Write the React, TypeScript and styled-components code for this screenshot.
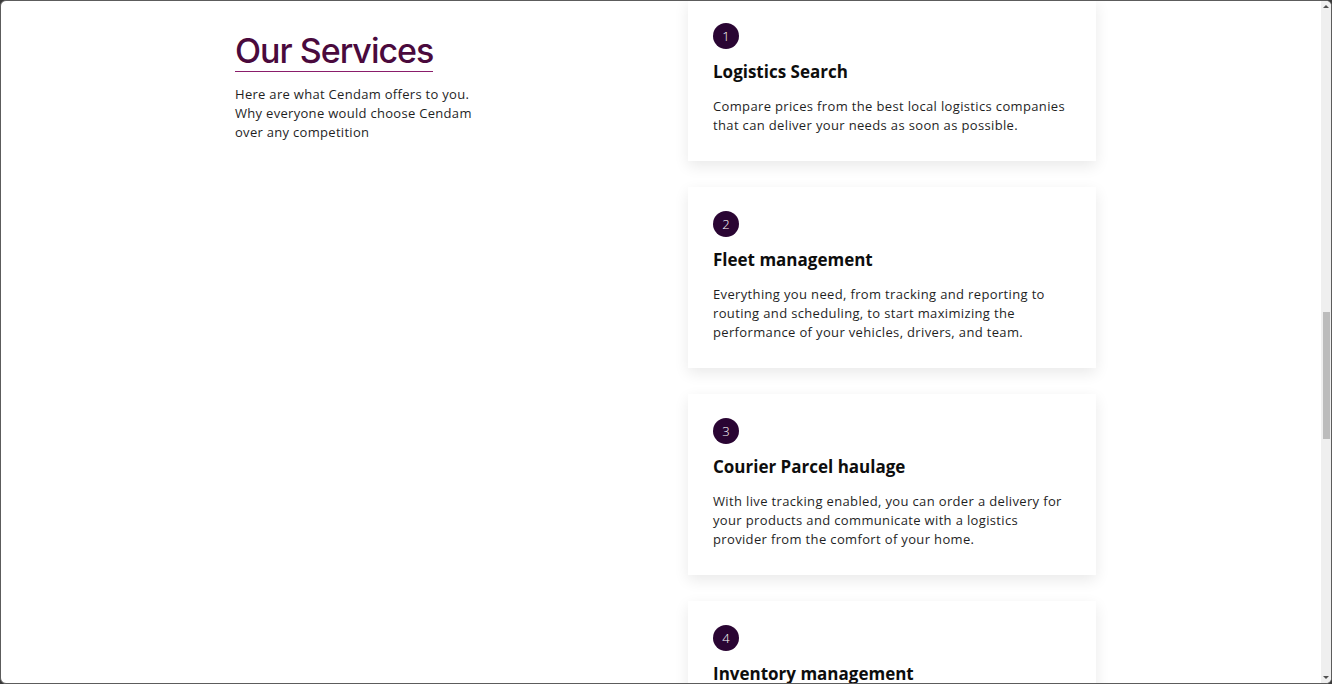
import React from "react";
import styled, { createGlobalStyle } from "styled-components";

const Global = createGlobalStyle`
  html, body { margin: 0; padding: 0; background: #3a3a3a; }
  body { font-family: "Open Sans", "DejaVu Sans", sans-serif; }
  * { box-sizing: border-box; }
`;

const Frame = styled.div`
  width: 1332px;
  height: 684px;
  border: 1px solid #5c5c5c;
  border-radius: 6px;
  background: #ffffff;
  overflow: hidden;
  display: flex;
`;

const Viewport = styled.div`
  flex: 1;
  overflow: hidden;
  padding-left: 234px;
`;

const Section = styled.section`
  display: grid;
  grid-template-columns: 453px 408px;
  margin-top: -2px;
`;

const Intro = styled.div`
  padding-top: 31px;
`;

const Heading = styled.h2`
  display: inline-block;
  margin: 0;
  font-family: Inter, "Liberation Sans", sans-serif;
  font-weight: 500;
  font-size: 34px;
  line-height: 41px;
  letter-spacing: -1px;
  color: #4a0a3d;
  border-bottom: 1px solid #8a1d6b;
`;

const Lead = styled.p`
  margin: 13px 0 0;
  width: 250px;
  font-size: 13px;
  line-height: 19px;
  letter-spacing: 0.3px;
  color: #1f1f1f;
`;

const Cards = styled.div`
  display: flex;
  flex-direction: column;
  gap: 26px;
`;

const Card = styled.article`
  background: #fff;
  padding: 24px 25px 26px;
  box-shadow: 0 5px 14px rgba(0, 0, 0, 0.09);
`;

const Badge = styled.div`
  width: 26px;
  height: 26px;
  border-radius: 50%;
  background: #2a0533;
  color: #fff;
  font-size: 13px;
  font-weight: 300;
  display: flex;
  align-items: center;
  justify-content: center;
`;

const Title = styled.h3`
  margin: 12px 0 0;
  font-family: "Open Sans", sans-serif;
  font-weight: 700;
  font-size: 17px;
  line-height: 22px;
  letter-spacing: 0;
  color: #0d0d0d;
`;

const Desc = styled.p`
  margin: 14px 0 0;
  font-size: 13px;
  line-height: 19px;
  letter-spacing: 0.35px;
  color: #1f1f1f;
`;

const Scrollbar = styled.div`
  width: 10px;
  background: #efefef;
  display: flex;
  flex-direction: column;
  align-items: center;
`;

const Arrow = styled.div<{ $down?: boolean }>`
  width: 0;
  height: 0;
  border-left: 3.5px solid transparent;
  border-right: 3.5px solid transparent;
  ${(p) =>
    p.$down
      ? "border-top: 3.5px solid #505050; margin-top: auto; margin-bottom: 4px;"
      : "border-bottom: 3.5px solid #505050; margin-top: 4px;"}
`;

const Thumb = styled.div`
  width: 7px;
  height: 127px;
  margin-top: 304px;
  margin-left: 1px;
  background: #bcbcbc;
`;

const services = [
  {
    n: 1,
    title: "Logistics Search",
    text: "Compare prices from the best local logistics companies that can deliver your needs as soon as possible.",
  },
  {
    n: 2,
    title: "Fleet management",
    text: "Everything you need, from tracking and reporting to routing and scheduling, to start maximizing the performance of your vehicles, drivers, and team.",
  },
  {
    n: 3,
    title: "Courier Parcel haulage",
    text: "With live tracking enabled, you can order a delivery for your products and communicate with a logistics provider from the comfort of your home.",
  },
  {
    n: 4,
    title: "Inventory management",
    text: "Keep track of your stock levels, orders and deliveries in one place, so you always know what you have and where it is.",
  },
];

export default function App() {
  return (
    <>
      <Global />
      <Frame>
        <Viewport>
          <Section>
            <Intro>
              <Heading>Our Services</Heading>
              <Lead>
                Here are what Cendam offers to you. Why everyone would choose Cendam over any competition
              </Lead>
            </Intro>
            <Cards>
              {services.map((s) => (
                <Card key={s.n}>
                  <Badge>{s.n}</Badge>
                  <Title>{s.title}</Title>
                  <Desc>{s.text}</Desc>
                </Card>
              ))}
            </Cards>
          </Section>
        </Viewport>
        <Scrollbar>
          <Arrow />
          <Thumb />
          <Arrow $down />
        </Scrollbar>
      </Frame>
    </>
  );
}
